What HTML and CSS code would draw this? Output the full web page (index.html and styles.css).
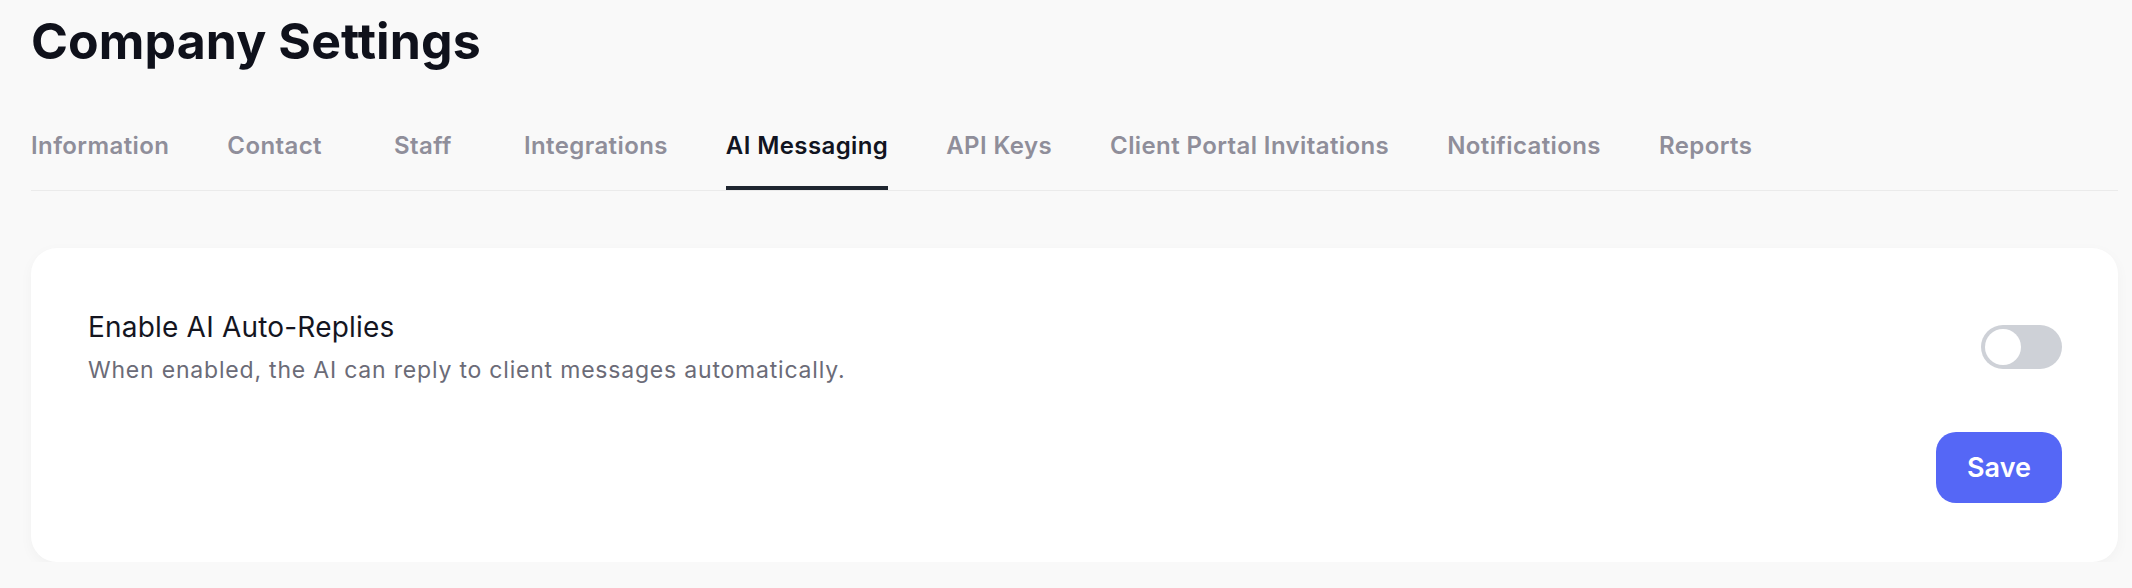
FILE: index.html
```html
<!DOCTYPE html>
<html lang="en">
<head>
<meta charset="utf-8">
<title>Company Settings</title>
<link rel="stylesheet" href="styles.css">
</head>
<body>
<div class="page">
  <h1 class="page-title">Company Settings</h1>
  <nav class="tabs">
    <a class="tab">Information</a>
    <a class="tab">Contact</a>
    <a class="tab">Staff</a>
    <a class="tab">Integrations</a>
    <a class="tab active">AI Messaging</a>
    <a class="tab">API Keys</a>
    <a class="tab">Client Portal Invitations</a>
    <a class="tab">Notifications</a>
    <a class="tab">Reports</a>
  </nav>
  <section class="card">
    <div class="setting-row">
      <div class="setting-text">
        <div class="setting-title">Enable AI Auto-Replies</div>
        <div class="setting-desc">When enabled, the AI can reply to client messages automatically.</div>
      </div>
      <div class="toggle"><span class="knob"></span></div>
    </div>
    <div class="actions">
      <button class="btn-save">Save</button>
    </div>
  </section>
</div>
</body>
</html>
```
FILE: styles.css
```css
* { box-sizing: border-box; }
html, body { margin: 0; padding: 0; }
body {
  background: #f9f9f9;
  font-family: Inter, "Noto Sans", sans-serif;
  color: #111322;
}
.page {
  padding: 11px 14px 0 31px;
}
.page-title {
  margin: 0;
  font-size: 50px;
  line-height: 60px;
  font-weight: 700;
  color: #0f111b;
  letter-spacing: 0.1px;
}
.tabs {
  display: flex;
  gap: 58px;
  margin-top: 59px;
  border-bottom: 1px solid #ebebeb;
}
.tab {
  min-width: 86px;
  text-align: center;
  font-size: 24px;
  line-height: 32px;
  font-weight: 600;
  letter-spacing: 0.4px;
  color: #8f8e9a;
  padding-bottom: 24px;
  border-bottom: 4px solid transparent;
  white-space: nowrap;
}
.tab.active {
  color: #111421;
  border-bottom-color: #1f2630;
}
.card {
  margin-top: 57px;
  background: #ffffff;
  border-radius: 26px;
  box-shadow: 0 4px 14px rgba(0, 0, 0, 0.035);
  padding: 61px 56px 59px 57px;
}
.setting-row {
  display: flex;
  align-items: center;
  justify-content: space-between;
}
.setting-title {
  font-size: 28px;
  line-height: 36px;
  font-weight: 400;
  letter-spacing: 0.2px;
  color: #14151f;
}
.setting-desc {
  margin-top: 10px;
  font-size: 23px;
  line-height: 30px;
  letter-spacing: 0.8px;
  color: #6b6b77;
}
.toggle {
  width: 81px;
  height: 44px;
  border-radius: 22px;
  background: #ced1d7;
  padding: 4px;
  display: flex;
}
.knob {
  width: 36px;
  height: 36px;
  border-radius: 50%;
  background: #ffffff;
}
.actions {
  display: flex;
  justify-content: flex-end;
  margin-top: 47px;
}
.btn-save {
  min-width: 126px;
  height: 71px;
  border: none;
  border-radius: 20px;
  background: #5567f6;
  color: #ffffff;
  font-family: Inter, "Noto Sans", sans-serif;
  font-size: 27px;
  font-weight: 600;
  padding: 0 30px;
}
```
